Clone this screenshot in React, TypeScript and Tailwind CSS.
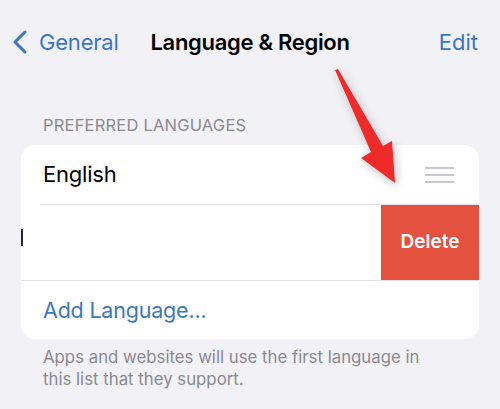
import React from "react";

const font = { fontFamily: "Inter, 'Noto Sans', sans-serif" };

const Arrow: React.FC = () => (
  <svg
    className="absolute left-0 top-0 pointer-events-none"
    width="500"
    height="409"
    viewBox="0 0 500 409"
  >
    <defs>
      <filter id="shadow" x="-50%" y="-50%" width="200%" height="200%">
        <feDropShadow dx="2" dy="3" stdDeviation="5" floodColor="#000" floodOpacity="0.25" />
      </filter>
    </defs>
    <polygon
      points="335,70 338,69 383,146 392,141 395,183 361,158 371,152"
      fill="#ee2a2a"
      filter="url(#shadow)"
    />
  </svg>
);

export default function App() {
  return (
    <div className="relative w-[500px] h-[409px] overflow-hidden bg-[#f1f1f6]" style={font}>
      {/* nav bar */}
      <div className="relative h-[84px] flex items-start pt-[27px]">
        <div className="flex items-center pl-[11px] text-[#3c77c2]">
          <svg width="18" height="26" viewBox="0 0 18 26" className="mr-[10px]">
            <path d="M14 3 L4 13 L14 23" fill="none" stroke="currentColor" strokeWidth="3" strokeLinecap="round" strokeLinejoin="round" />
          </svg>
          <span className="text-[22px] leading-[30px] tracking-[-0.2px]">General</span>
        </div>
        <div className="absolute left-0 right-0 top-[27px] flex justify-center">
          <span className="text-[22px] leading-[30px] font-semibold text-black tracking-[-0.3px]">Language &amp; Region</span>
        </div>
        <span className="ml-auto mr-[22px] text-[22px] leading-[30px] text-[#3c77c2]">Edit</span>
      </div>

      <div className="pl-[43px] text-[16.5px] leading-[20px] text-[#8a8a8f] tracking-[0.2px] mt-[31px]">
        PREFERRED LANGUAGES
      </div>

      {/* card */}
      <div className="mx-[21px] mt-[10px] bg-white rounded-[14px] overflow-hidden">
        <div className="h-[59px] flex items-center pl-[22px] pr-[25px]">
          <span className="text-[22px] text-black tracking-[-0.2px]">English</span>
          <div className="ml-auto flex flex-col gap-[5px] w-[29px]">
            <div className="h-[2px] bg-[#c8c8cc]" />
            <div className="h-[2px] bg-[#c8c8cc]" />
            <div className="h-[2px] bg-[#c8c8cc]" />
          </div>
        </div>
        <div className="ml-[19px] h-px bg-[#e2e2e6]" />
        <div className="h-[75px] flex items-stretch">
          <div className="flex-1 flex items-center">
            <div className="w-[2px] h-[17px] bg-[#222] -mt-[10px]" />
          </div>
          <div className="w-[98px] bg-[#e5513f] flex items-center justify-center">
            <span className="text-white text-[19px] font-semibold">Delete</span>
          </div>
        </div>
        <div className="h-px bg-[#e2e2e6]" />
        <div className="h-[58px] flex items-center pl-[22px]">
          <span className="text-[21.5px] text-[#3c77c2] tracking-[-0.2px]">Add Language...</span>
        </div>
      </div>

      <p className="pl-[43px] pr-[60px] mt-[7px] text-[16.8px] leading-[22px] text-[#8a8a8f]">
        Apps and websites will use the first language in this list that they support.
      </p>

      <Arrow />
    </div>
  );
}
